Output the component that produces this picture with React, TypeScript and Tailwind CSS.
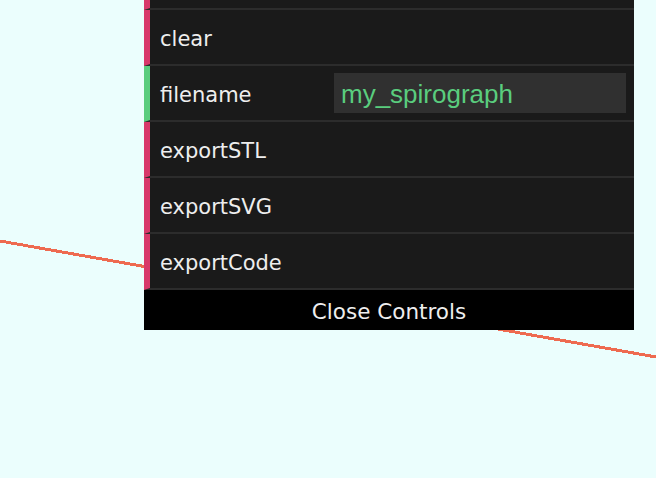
import React from 'react';

type Row = {
  label: string;
  kind: 'fn' | 'string';
  value?: string;
};

// first row is mostly scrolled off the top, only its bottom edge shows
const rows: Row[] = [
  { label: '', kind: 'fn' },
  { label: 'clear', kind: 'fn' },
  { label: 'filename', kind: 'string', value: 'my_spirograph' },
  { label: 'exportSTL', kind: 'fn' },
  { label: 'exportSVG', kind: 'fn' },
  { label: 'exportCode', kind: 'fn' },
];

function ControlRow({ row }: { row: Row }) {
  const bar = row.kind === 'fn' ? 'border-l-[#d8386a]' : 'border-l-[#5acd7e]';
  return (
    <div
      className={`flex h-[56px] items-center border-l-[6px] border-b-2 border-b-[#2c2c2c] bg-[#1a1a1a] ${bar}`}
    >
      <span className="w-[184px] shrink-0 pl-[10px] pt-[6px] font-['DejaVu_Sans',sans-serif] text-[21px] text-[#eeeeee]">
        {row.label}
      </span>
      {row.kind === 'string' && (
        <input
          readOnly
          value={row.value}
          className="h-[40px] w-[292px] bg-[#303030] px-[7px] pt-[2px] font-['Liberation_Sans',Arial,sans-serif] text-[26px] text-[#5acd7e] outline-none"
        />
      )}
    </div>
  );
}

export default function App() {
  return (
    <div className="relative h-[478px] w-full overflow-hidden bg-[#ebfefd]">
      {/* curve drawn underneath the controls */}
      <svg className="absolute inset-0" width="656" height="478" aria-hidden="true">
        <line
          x1="0"
          y1="241"
          x2="656"
          y2="357"
          stroke="#ee6a50"
          strokeWidth="3"
          shapeRendering="crispEdges"
        />
      </svg>

      <div className="relative pl-[144px]">
        <div className="-mt-[46px] w-[490px]">
          {rows.map((r, i) => (
            <ControlRow key={i} row={r} />
          ))}
          <div className="flex h-[40px] items-center justify-center bg-black pt-[4px] font-['DejaVu_Sans',sans-serif] text-[21.5px] text-[#eeeeee]">
            Close Controls
          </div>
        </div>
      </div>
    </div>
  );
}
